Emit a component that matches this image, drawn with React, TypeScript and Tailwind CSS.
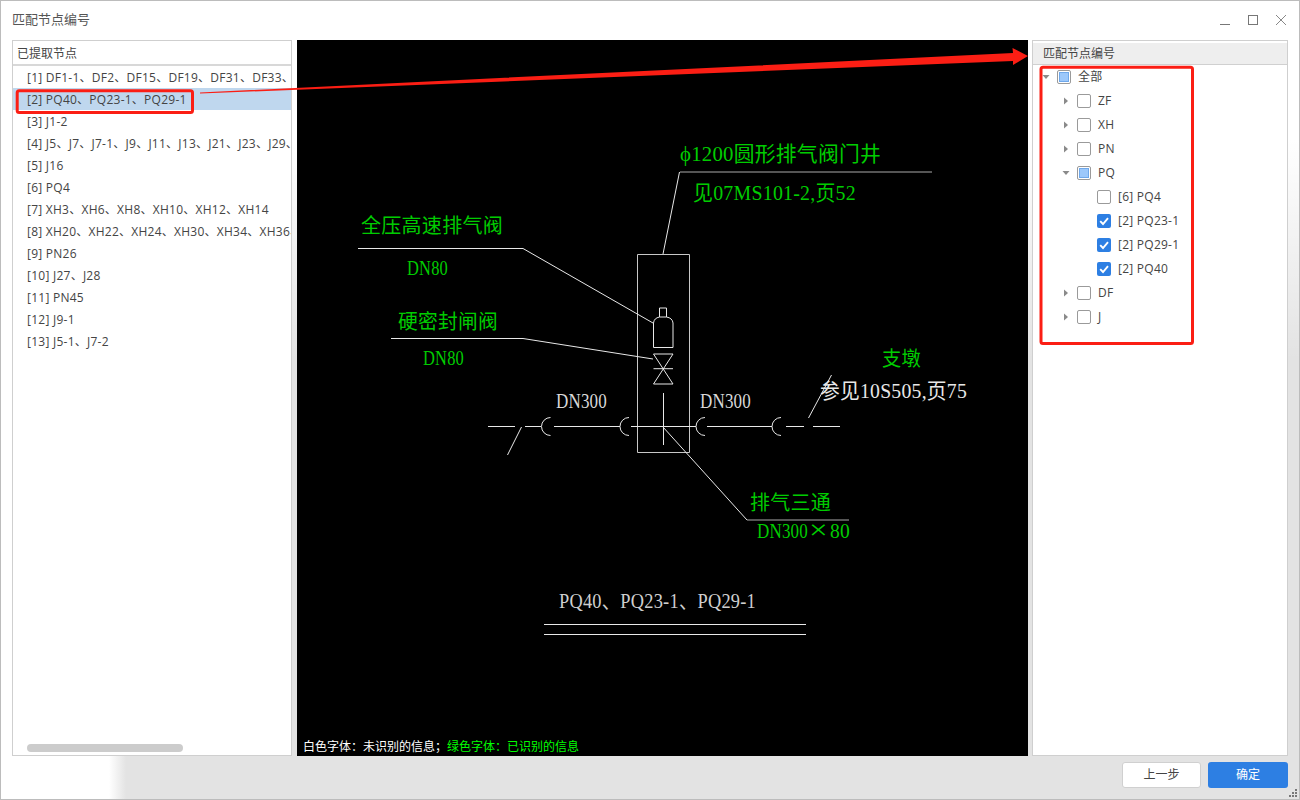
import React from "react";

const uiFont = "font-['Open_Sans','Noto_Sans_CJK_SC',sans-serif]";

const leftRows = [
  "[1] DF1-1、DF2、DF15、DF19、DF31、DF33、DF35、DF37",
  "[2] PQ40、PQ23-1、PQ29-1",
  "[3] J1-2",
  "[4] J5、J7、J7-1、J9、J11、J13、J21、J23、J29、J31",
  "[5] J16",
  "[6] PQ4",
  "[7] XH3、XH6、XH8、XH10、XH12、XH14",
  "[8] XH20、XH22、XH24、XH30、XH34、XH36、XH38",
  "[9] PN26",
  "[10] J27、J28",
  "[11] PN45",
  "[12] J9-1",
  "[13] J5-1、J7-2",
];

type State = "none" | "partial" | "checked";
type Node = { label: string; level: number; state: State; arrow?: "right" | "down" };

const tree: Node[] = [
  { label: "全部", level: 0, state: "partial", arrow: "down" },
  { label: "ZF", level: 1, state: "none", arrow: "right" },
  { label: "XH", level: 1, state: "none", arrow: "right" },
  { label: "PN", level: 1, state: "none", arrow: "right" },
  { label: "PQ", level: 1, state: "partial", arrow: "down" },
  { label: "[6] PQ4", level: 2, state: "none" },
  { label: "[2] PQ23-1", level: 2, state: "checked" },
  { label: "[2] PQ29-1", level: 2, state: "checked" },
  { label: "[2] PQ40", level: 2, state: "checked" },
  { label: "DF", level: 1, state: "none", arrow: "right" },
  { label: "J", level: 1, state: "none", arrow: "right" },
];

function Check({ state }: { state: State }) {
  if (state === "checked") {
    return (
      <span className="w-[14px] h-[14px] rounded-[2px] bg-[#2d7fe3] flex items-center justify-center shrink-0">
        <svg width="12" height="12" viewBox="0 0 12 12" fill="none">
          <path d="M2.2 6.2 L5 9 L10 3.2" stroke="#fff" strokeWidth="1.9" />
        </svg>
      </span>
    );
  }
  return (
    <span className="w-[14px] h-[14px] rounded-[2px] border border-[#9a9a9a] bg-white flex items-center justify-center shrink-0">
      {state === "partial" && <span className="w-[10px] h-[10px] bg-[#9cc8fb] border border-[#6fa8ea]" />}
    </span>
  );
}

function Arrow({ dir }: { dir?: "right" | "down" }) {
  return (
    <span className="w-[8px] h-[8px] flex items-center justify-center shrink-0">
      {dir === "right" && (
        <svg width="6" height="8" viewBox="0 0 6 8">
          <path d="M1 0.5 L5 4 L1 7.5 Z" fill="#8a8a8a" />
        </svg>
      )}
      {dir === "down" && (
        <svg width="8" height="6" viewBox="0 0 8 6">
          <path d="M0.5 1 L7.5 1 L4 5 Z" fill="#8a8a8a" />
        </svg>
      )}
    </span>
  );
}

function T({ x, y, w, size = 20, fill = "#00cc00", children }: { x: number; y: number; w: number; size?: number; fill?: string; children: React.ReactNode }) {
  return (
    <text x={x} y={y} textLength={w} lengthAdjust="spacingAndGlyphs" fontSize={size} fill={fill} fontFamily="'Liberation Serif','Noto Sans CJK SC',serif">
      {children}
    </text>
  );
}

const pipes = "M488 426.5H515 M525 426.5H541 M554 426.5H620 M631 426.5H696 M707 426.5H772 M786 426.5H804 M813 426.5H840";

function Drawing() {
  return (
    <svg viewBox="297 40 731 716" className="absolute inset-0 w-full h-full" fill="none">
      <g stroke="#e8e8e8" strokeWidth="1">
        <path d="M637.5 254.5H689.5V452.5H637.5Z" stroke="#c8c8c8" />
        <path d="M663 254 L679.5 172" />
        <path d="M680 172H932" stroke="#aaa" strokeWidth="1.2" />
        <path d="M358 248.5H523 L653 323" />
        <path d="M391 338.5H523 L653 359" />
        <path d="M659.5 317V308H666.5V317" />
        <path d="M653.5 323 Q654 318 659.5 317 H666.5 Q672.5 318 673 323 V347.5 H653.5 Z" />
        <path d="M653.5 354H673 L653.5 384H673 L653.5 354 M653.5 368.7H673" />
        <path d="M663.5 393V445" />
        <path d={pipes} />
        <path d="M521.5 427 L507.5 455" />
        <path d="M808.5 418 L831.5 375" />
        <path d="M550.5 417.5 A9 9 0 0 0 550.5 435.5 M629 417.5 A9 9 0 0 0 629 435.5 M705 417.5 A9 9 0 0 0 705 435.5 M781 417.5 A9 9 0 0 0 781 435.5" />
        <path d="M663 427 L747 520" />
        <path d="M747 520H849" stroke="#aaa" strokeWidth="1.2" />
        <path d="M544 624.5H806 M544 634.5H806" />
      </g>
      <T x={680} y={161} w={201} size={21}>ϕ1200圆形排气阀门井</T>
      <T x={693} y={200} w={163} size={21}>见07MS101-2,页52</T>
      <T x={361} y={233} w={142}>全压高速排气阀</T>
      <T x={407} y={275} w={41} size={22}>DN80</T>
      <T x={398} y={329} w={100}>硬密封闸阀</T>
      <T x={423} y={365} w={41} size={22}>DN80</T>
      <T x={882} y={366} w={39}>支墩</T>
      <T x={820} y={398} w={147} size={21} fill="#e8e8e8">参见10S505,页75</T>
      <T x={556} y={408} w={51} size={22} fill="#d8d8d8">DN300</T>
      <T x={700} y={408} w={51} size={22} fill="#d8d8d8">DN300</T>
      <T x={750} y={510} w={81}>排气三通</T>
      <T x={757} y={538} w={51} size={22}>DN300</T>
      <T x={809} y={539} w={19} size={28}>×</T>
      <T x={830} y={538} w={20} size={22}>80</T>
      <T x={559} y={608} w={197} size={21} fill="#cfcfcf">PQ40、PQ23-1、PQ29-1</T>
    </svg>
  );
}

function Annotation() {
  return (
    <svg width="1300" height="800" viewBox="0 0 1300 800" className="absolute -left-px -top-px pointer-events-none" fill="none">
      <rect x="17.2" y="90.8" width="175.3" height="21.8" rx="2" stroke="#fb1e14" strokeWidth="3" />
      <rect x="1041" y="67.2" width="151.5" height="276.3" rx="2" stroke="#fb1e14" strokeWidth="3" />
      <path d="M200 92.6 L1013 53 L1012.5 48 L1028 56 L1013 65 L1013 61 L200 93.6 Z" fill="#fb1e14" />
    </svg>
  );
}

export default function App() {
  return (
    <div className={`relative w-[1300px] h-[800px] border border-[#bcbcbc] flex flex-col overflow-hidden text-[12px] text-[#444] tracking-[0.25px] bg-[linear-gradient(to_right,#ffffff_108px,#e3e3e3_125px)] ${uiFont}`}>
      <div className="h-[39px] shrink-0 bg-white flex items-center justify-between pl-[11px] pr-[13px] pb-[2px]">
        <span className="text-[13px] text-[#555] tracking-normal">匹配节点编号</span>
        <div className="flex items-center gap-[18px]">
          <svg width="10" height="10" viewBox="0 0 10 10" fill="none"><path d="M0 9.5H10" stroke="#777" /></svg>
          <svg width="10" height="10" viewBox="0 0 10 10" fill="none"><rect x="0.5" y="0.5" width="9" height="9" stroke="#777" /></svg>
          <svg width="10" height="10" viewBox="0 0 10 10" fill="none"><path d="M0 0L10 10M10 0L0 10" stroke="#888" /></svg>
        </div>
      </div>

      <div className="h-[716px] shrink-0 flex pl-[11px] pr-[11px] bg-[linear-gradient(to_bottom,#ffffff_100px,transparent_320px)]">
        <div className="w-[280px] shrink-0 border border-[#cfcfcf] bg-white flex flex-col relative overflow-hidden">
          <div className="h-[25px] shrink-0 flex items-center pl-[4px] pt-[2px] border-b-2 border-[#d8d8d8] text-[#444] tracking-normal">已提取节点</div>
          <div className="flex flex-col">
            {leftRows.map((r, i) => (
              <div key={i} className={`h-[22px] shrink-0 flex items-center pl-[14px] pt-px whitespace-nowrap overflow-hidden ${i === 1 ? "bg-[#bfd7ee]" : ""}`}>
                {r}
              </div>
            ))}
          </div>
          <div className="absolute left-[14px] bottom-[3px] w-[156px] h-[8px] rounded-full bg-[#cccccc]" />
        </div>

        <div className="w-[731px] shrink-0 ml-[5px] bg-black relative">
          <Drawing />
          <div className="absolute left-[6px] bottom-[1px] whitespace-nowrap text-[12px] leading-[16px] tracking-normal">
            <span className="text-white">白色字体：未识别的信息；</span>
            <span className="text-[#00ff00]">绿色字体：已识别的信息</span>
          </div>
        </div>

        <div className="w-[256px] shrink-0 ml-[4px] border border-[#cfcfcf] bg-white flex flex-col">
          <div className="h-[22px] mt-[2px] shrink-0 bg-[#eeeeee] border-b border-[#d0d0d0] flex items-center pl-[10px] tracking-normal">匹配节点编号</div>
          <div className="flex flex-col">
            {tree.map((n) => (
              <div
                key={n.label}
                className={`h-[24px] shrink-0 flex items-center ${n.level === 0 ? "pl-[9px]" : n.level === 1 ? "pl-[29px]" : "pl-[64px]"}`}
              >
                {n.level < 2 && <Arrow dir={n.arrow} />}
                <span className={n.level < 2 ? "ml-[7px]" : ""}>
                  <Check state={n.state} />
                </span>
                <span className="ml-[7px] whitespace-nowrap">{n.label}</span>
              </div>
            ))}
          </div>
        </div>
      </div>

      <div className="flex-1 flex items-start justify-end gap-[7px] pt-[6px] pr-[11px] tracking-normal">
        <button className="w-[79px] h-[26px] rounded-[3px] bg-white border border-[#d0d0d0] text-[#444] text-[12px]">上一步</button>
        <button className="w-[80px] h-[26px] rounded-[3px] bg-[#2d7fe3] text-white text-[12px]">确定</button>
      </div>
      <svg width="10" height="10" viewBox="0 0 10 10" className="absolute right-[1px] bottom-[1px]" fill="#777">
        <rect x="7" y="1" width="2" height="2" />
        <rect x="4" y="4" width="2" height="2" />
        <rect x="7" y="4" width="2" height="2" />
        <rect x="1" y="7" width="2" height="2" />
        <rect x="4" y="7" width="2" height="2" />
        <rect x="7" y="7" width="2" height="2" />
      </svg>

      <Annotation />
    </div>
  );
}
